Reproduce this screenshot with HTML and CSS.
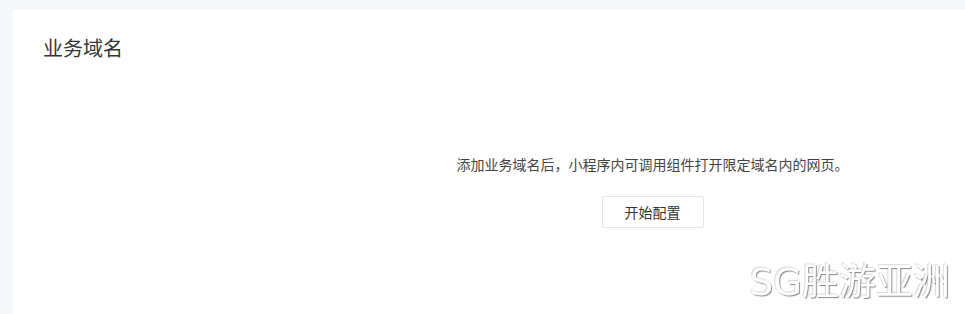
FILE: index.html
```html
<!DOCTYPE html>
<html lang="zh-CN">

<head>
    <meta charset="UTF-8">
    <meta name="viewport" content="width=device-width, initial-scale=1.0">
    <title>业务域名</title>
    <link rel="stylesheet" href="styles.css">
</head>

<body>
    <div class="page">
        <div class="card">
            <h2 class="card-title">业务域名</h2>
            <div class="empty">
                <p class="empty-text">添加业务域名后，小程序内可调用组件打开限定域名内的网页。</p>
                <button class="btn">开始配置</button>
            </div>
        </div>
    </div>
    <div class="watermark">SG胜游亚洲</div>
</body>

</html>
```

FILE: styles.css
```css
html,
body {
    height: 100%;
}

body {
    margin: 0;
    background-color: #f6f7f9;
    font-family: "Noto Sans CJK SC", "Noto Sans", sans-serif;
    color: #353535;
    overflow: hidden;
}

.page {
    height: 100%;
    padding: 10px 0 0 13px;
    box-sizing: border-box;
}

.card {
    background: #fff;
    height: 100%;
    padding: 24px 30px 0;
    box-sizing: border-box;
}

.card-title {
    margin: 0;
    font-size: 20px;
    line-height: 28px;
    font-weight: normal;
}

.empty {
    display: flex;
    flex-direction: column;
    align-items: center;
    padding: 92px 0 0 327px;
}

.empty-text {
    margin: 0 0 22px;
    font-size: 14px;
    line-height: 20px;
    color: #444;
}

.btn {
    width: 102px;
    height: 32px;
    border: 1px solid #e4e6ea;
    border-radius: 2px;
    background: #fff;
    color: #353535;
    font-family: inherit;
    font-size: 14px;
    cursor: pointer;
}

.watermark {
    position: fixed;
    right: 15px;
    bottom: 9px;
    font-family: "DejaVu Sans", "Noto Sans CJK SC", sans-serif;
    font-size: 37px;
    line-height: 44px;
    color: #fff;
    text-shadow: 1px 1px 1px #8a8a8a, -1px -1px 1px #d8d8d8;
}
```
